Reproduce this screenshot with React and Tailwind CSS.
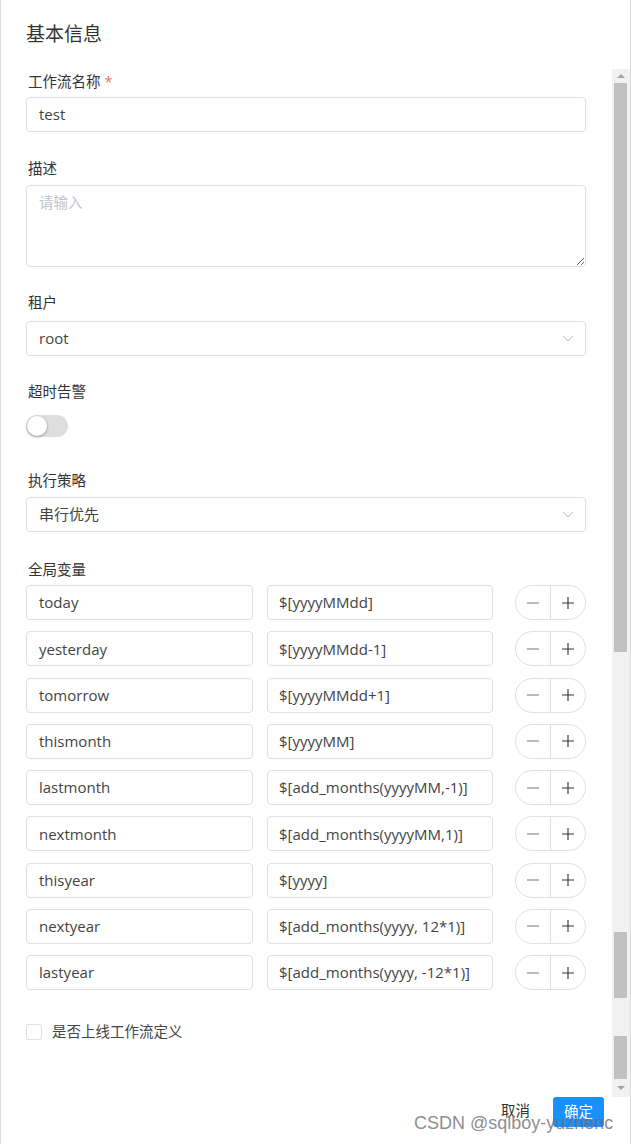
import React from 'react';

const vars = [
  ['today', '$[yyyyMMdd]'],
  ['yesterday', '$[yyyyMMdd-1]'],
  ['tomorrow', '$[yyyyMMdd+1]'],
  ['thismonth', '$[yyyyMM]'],
  ['lastmonth', '$[add_months(yyyyMM,-1)]'],
  ['nextmonth', '$[add_months(yyyyMM,1)]'],
  ['thisyear', '$[yyyy]'],
  ['nextyear', '$[add_months(yyyy, 12*1)]'],
  ['lastyear', '$[add_months(yyyy, -12*1)]'],
];

function Chevron() {
  return (
    <svg width="12" height="7" viewBox="0 0 12 7" fill="none">
      <path d="M1 1l5 5 5-5" stroke="#c0c4cc" strokeWidth="1" />
    </svg>
  );
}

function Select({ value }) {
  return (
    <div className="h-[35px] border border-[#dcdfe6] rounded-[4px] flex items-center justify-between pl-[12px] pr-[11px] text-[#444] text-[15px]">
      <span>{value}</span>
      <Chevron />
    </div>
  );
}

function Label({ children, required }) {
  return (
    <div className="h-[22px] leading-[22px] pl-[2px] text-[#333]">
      {children}
      {required && <span className="text-[#f56c6c] ml-[4px]">*</span>}
    </div>
  );
}

function VarRow({ k, v }) {
  return (
    <div className="flex h-[35px] text-[15px] text-[#444]">
      <div className="w-[227px] border border-[#dcdfe6] rounded-[4px] flex items-center pl-[12px]">{k}</div>
      <div className="w-[226px] ml-[14px] border border-[#dcdfe6] rounded-[4px] flex items-center pl-[11px] whitespace-nowrap overflow-hidden">{v}</div>
      <div className="w-[71px] ml-[22px] border border-[#dcdfe6] rounded-full flex">
        <div className="flex-1 flex items-center justify-center border-r border-[#dcdfe6]">
          <svg width="14" height="14" viewBox="0 0 14 14"><path d="M1 7h12" stroke="#8c8c8c" strokeWidth="1.2" /></svg>
        </div>
        <div className="flex-1 flex items-center justify-center">
          <svg width="14" height="14" viewBox="0 0 14 14"><path d="M1 7h12M7 1v12" stroke="#333" strokeWidth="1.1" /></svg>
        </div>
      </div>
    </div>
  );
}

export default function App() {
  return (
    <div
      className="w-[631px] h-[1144px] relative bg-white border-l border-r border-[#dcdcdc] flex flex-col text-[14.5px] overflow-hidden"
      style={{ fontFamily: '"Open Sans", "Noto Sans CJK SC", sans-serif' }}
    >
      {/* header */}
      <div className="h-[69px] shrink-0 pl-[25px] pt-[22px] text-[19px] leading-[24px] text-[#333]">基本信息</div>

      {/* scroll body */}
      <div className="flex h-[1028px] shrink-0">
        <div className="w-[611px] overflow-hidden pl-[25px] pr-[26px] pt-[1.5px]">
          <Label required>工作流名称</Label>
          <div className="mt-[4.5px] h-[35px] border border-[#dcdfe6] rounded-[4px] flex items-center pl-[12px] text-[#444] text-[15px]">test</div>

          <div className="mt-[26px]"><Label>描述</Label></div>
          <textarea
            readOnly
            placeholder="请输入"
            className="mt-[5px] block w-full h-[82px] border border-[#dcdfe6] rounded-[4px] pl-[12px] pt-[6px] text-[#444] placeholder:text-[#c0c4cc] outline-none resize-y"
          />

          <div className="mt-[25px]"><Label>租户</Label></div>
          <div className="mt-[7px]"><Select value="root" /></div>

          <div className="mt-[25px]"><Label>超时告警</Label></div>
          <div className="mt-[5px] h-[35px] flex items-center">
            <div className="w-[42px] h-[22px] rounded-full bg-[#dedede] p-[1px] flex items-center">
              <div className="w-[20px] h-[20px] rounded-full bg-white shadow-[0_1px_3px_rgba(0,0,0,0.35)]" />
            </div>
          </div>

          <div className="mt-[27px]"><Label>执行策略</Label></div>
          <div className="mt-[5px]"><Select value="串行优先" /></div>

          <div className="mt-[27px]"><Label>全局变量</Label></div>
          <div className="mt-[4px] flex flex-col gap-[11.25px]">
            {vars.map(([k, v]) => (
              <VarRow key={k} k={k} v={v} />
            ))}
          </div>

          <div className="mt-[33px] h-[18px] flex items-center">
            <div className="w-[16px] h-[16px] border border-[#dcdfe6] rounded-[2px] bg-white" />
            <span className="ml-[10px] text-[#444]">是否上线工作流定义</span>
          </div>
        </div>

        {/* scrollbar */}
        <div className="w-[18px] bg-[#f1f1f1] flex flex-col items-start">
          <div className="h-[14px] w-full flex items-center justify-center">
            <div className="w-0 h-0 border-l-[4px] border-r-[4px] border-b-[4px] border-l-transparent border-r-transparent border-b-[#a3a3a3]" />
          </div>
          <div className="ml-[2px] w-[13px] h-[569px] bg-[#c1c1c1]" />
          <div className="ml-[2px] mt-[280px] w-[13px] h-[66px] bg-[#c1c1c1]" />
          <div className="ml-[2px] mt-[38px] w-[13px] h-[43px] bg-[#c1c1c1]" />
          <div className="h-[18px] w-full flex items-center justify-center">
            <div className="w-0 h-0 border-l-[4px] border-r-[4px] border-t-[4px] border-l-transparent border-r-transparent border-t-[#a3a3a3]" />
          </div>
        </div>
      </div>

      {/* footer */}
      <div className="flex-1 flex justify-end items-start pr-[26px]">
        <span className="h-[30px] leading-[28px] mr-[23px] text-[#333]">取消</span>
        <div className="w-[51px] h-[30px] rounded-[3px] bg-[#1890ff] text-white flex items-center justify-center">确定</div>
      </div>

      {/* watermark */}
      <div
        className="absolute left-[413px] top-[1111px] text-[18px] leading-[24px] text-[rgba(110,110,110,0.8)] whitespace-nowrap"
        style={{ fontFamily: '"Liberation Sans", Arial, sans-serif' }}
      >
        CSDN @sqlboy-yuzhenc
      </div>
    </div>
  );
}
